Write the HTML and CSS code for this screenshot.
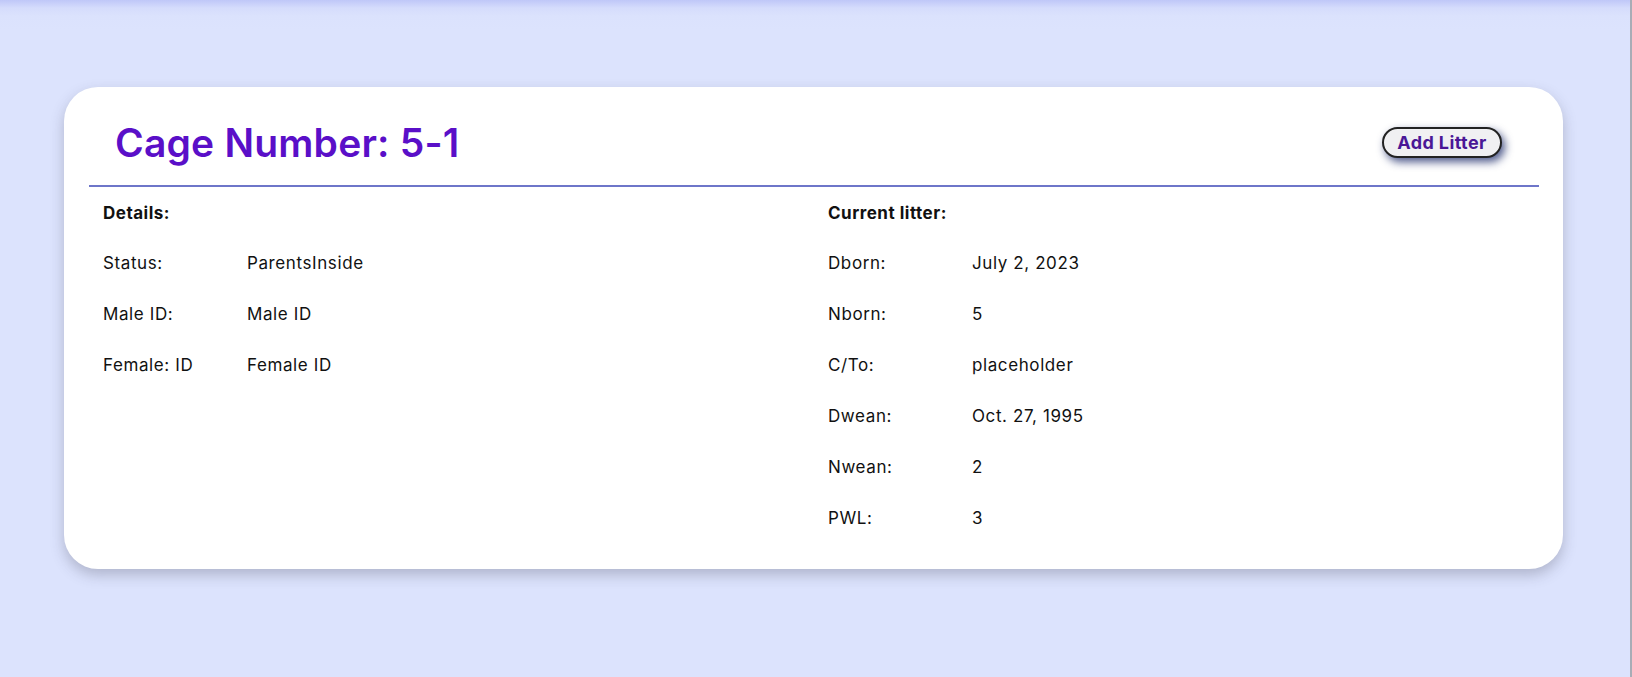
FILE: index.html
```html
<!DOCTYPE html>
<html lang="en">
<head>
<meta charset="utf-8">
<title>Cage 5-1</title>
<link rel="stylesheet" href="styles.css">
</head>
<body>
<div class="page">
  <section class="card">
    <header class="card-header">
      <h1 class="title">Cage Number: 5-1</h1>
      <button class="add-btn" type="button">Add Litter</button>
    </header>
    <div class="card-body">
      <div class="col">
        <div class="col-title">Details:</div>
        <div class="row"><span class="label">Status:</span><span class="value">ParentsInside</span></div>
        <div class="row"><span class="label">Male ID:</span><span class="value">Male ID</span></div>
        <div class="row"><span class="label">Female: ID</span><span class="value">Female ID</span></div>
      </div>
      <div class="col">
        <div class="col-title">Current litter:</div>
        <div class="row"><span class="label">Dborn:</span><span class="value">July 2, 2023</span></div>
        <div class="row"><span class="label">Nborn:</span><span class="value">5</span></div>
        <div class="row"><span class="label">C/To:</span><span class="value">placeholder</span></div>
        <div class="row"><span class="label">Dwean:</span><span class="value">Oct. 27, 1995</span></div>
        <div class="row"><span class="label">Nwean:</span><span class="value">2</span></div>
        <div class="row"><span class="label">PWL:</span><span class="value">3</span></div>
      </div>
    </div>
  </section>
</div>
</body>
</html>
```

FILE: styles.css
```css
* { box-sizing: border-box; }

html, body {
  margin: 0;
  height: 100%;
}

body {
  background: linear-gradient(#bfc7f8 0px, #d5dcfc 8px, #dbe2fd 16px, #dce3fd 30px);
  font-family: "Inter", "Noto Sans", sans-serif;
  color: #111;
  overflow: hidden;
}

.page {
  height: 100%;
  padding: 87px 67px 0 64px;
  border-right: 2px solid #a8acb6;
}

.card {
  background: #fff;
  border-radius: 34px;
  height: 482px;
  padding: 0 24px 0 25px;
  box-shadow: 0 6px 14px rgba(60, 60, 80, 0.28);
}

.card-header {
  display: flex;
  align-items: center;
  justify-content: space-between;
  height: 100px;
  padding: 12px 37px 0 26px;
  border-bottom: 2px solid #6e76c9;
}

.title {
  margin: 0;
  font-size: 39px;
  font-weight: 600;
  color: #5a0fc8;
  letter-spacing: 0.2px;
}

.add-btn {
  font-family: "Inter", "Noto Sans", sans-serif;
  font-size: 18px;
  font-weight: 700;
  letter-spacing: 0.4px;
  color: #4a1796;
  background: #f0f0f2;
  border: 2px solid #222;
  border-radius: 999px;
  height: 31px;
  width: 120px;
  padding: 0;
  box-shadow: 3px 4px 9px rgba(20, 35, 100, 0.75);
}

.card-body {
  display: grid;
  grid-template-columns: 1fr 1fr;
}

.col {
  padding: 14px 13px 0 14px;
  display: flex;
  flex-direction: column;
  gap: 27px;
}

.col-title {
  font-size: 17px;
  line-height: 24px;
  font-weight: 700;
  letter-spacing: 0.5px;
  margin-bottom: -1px;
}

.row {
  display: flex;
  font-size: 17px;
  line-height: 24px;
  letter-spacing: 0.6px;
}

.label {
  width: 144px;
  flex: none;
}
```
